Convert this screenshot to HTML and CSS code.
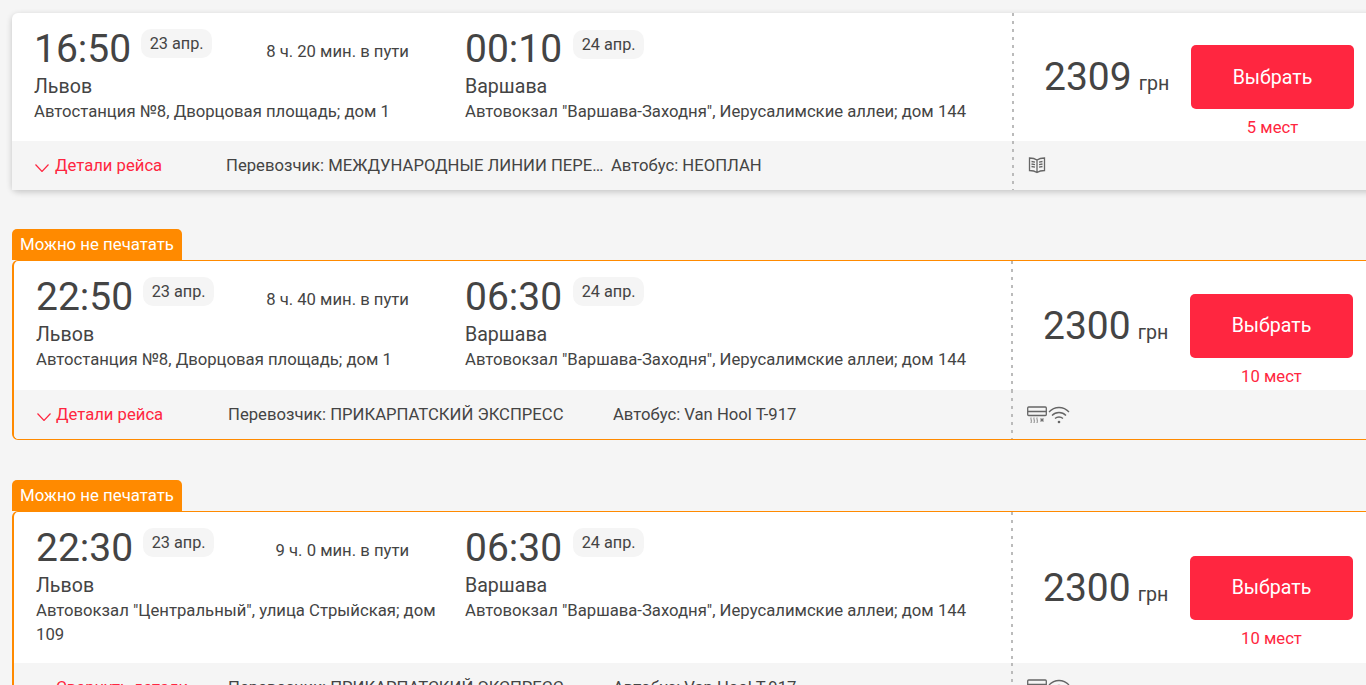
FILE: index.html
```html
<!DOCTYPE html>
<html lang="ru">

<head>
    <meta charset="UTF-8">
    <meta name="viewport" content="width=device-width, initial-scale=1.0">
    <title>Рейсы Львов - Варшава</title>
    <link rel="stylesheet" href="styles.css">
</head>

<body>
    <div class="list">
        <div class="trip trip-first">
            <div class="trip-top">
                <div class="route">
                    <div class="point">
                        <div class="time-row">
                            <span class="time">16:50</span>
                            <span class="date">23 апр.</span>
                            <span class="duration">8 ч. 20 мин. в пути</span>
                        </div>
                        <div class="city">Львов</div>
                        <div class="address">Автостанция №8, Дворцовая площадь; дом 1</div>
                    </div>
                    <div class="point point-end">
                        <div class="time-row">
                            <span class="time">00:10</span>
                            <span class="date">24 апр.</span>
                        </div>
                        <div class="city">Варшава</div>
                        <div class="address">Автовокзал "Варшава-Заходня", Иерусалимские аллеи; дом 144</div>
                    </div>
                </div>
                <div class="buy">
                    <div class="price"><span class="sum">2309</span> <span class="currency">грн</span></div>
                    <button class="select">Выбрать</button>
                    <div class="seats">5 мест</div>
                </div>
            </div>
            <div class="trip-foot">
                <div class="info">
                    <a class="details" href="#">
                        <svg class="chevron" viewBox="0 0 14 8"><path d="M0.5 0.5L7 7.5L13.5 0.5"/></svg>
                        Детали рейса
                    </a>
                    <span class="carrier">Перевозчик: МЕЖДУНАРОДНЫЕ ЛИНИИ ПЕРЕВОЗОК</span>
                    <span class="bus">Автобус: НЕОПЛАН</span>
                </div>
                <div class="extras">
                    <svg class="icon" width="18" height="17" viewBox="0 0 18 17">
                        <path d="M9 3C7 1.600 4 1 1.500 1V13.500C4 13.500 7 14.100 9 15.500C11 14.100 14 13.500 16.500 13.500V1C14 1 11 1.600 9 3ZM9 3V15.500"/>
                        <path d="M3.500 4.500L7 5.200M3.500 7L7 7.700M3.500 9.500L7 10.200M14.500 4.500L11 5.200M14.500 7L11 7.700M14.500 9.500L11 10.200"/>
                    </svg>
                </div>
            </div>
        </div>

        <div class="ticketless">
            <div class="tag">Можно не печатать</div>
            <div class="trip trip-marked">
                <div class="trip-top">
                    <div class="route">
                        <div class="point">
                            <div class="time-row">
                                <span class="time">22:50</span>
                                <span class="date">23 апр.</span>
                                <span class="duration">8 ч. 40 мин. в пути</span>
                            </div>
                            <div class="city">Львов</div>
                            <div class="address">Автостанция №8, Дворцовая площадь; дом 1</div>
                        </div>
                        <div class="point point-end">
                            <div class="time-row">
                                <span class="time">06:30</span>
                                <span class="date">24 апр.</span>
                            </div>
                            <div class="city">Варшава</div>
                            <div class="address">Автовокзал "Варшава-Заходня", Иерусалимские аллеи; дом 144</div>
                        </div>
                    </div>
                    <div class="buy">
                        <div class="price"><span class="sum">2300</span> <span class="currency">грн</span></div>
                        <button class="select">Выбрать</button>
                        <div class="seats">10 мест</div>
                    </div>
                </div>
                <div class="trip-foot">
                    <div class="info">
                        <a class="details" href="#">
                            <svg class="chevron" viewBox="0 0 14 8"><path d="M0.5 0.5L7 7.5L13.5 0.5"/></svg>
                            Детали рейса
                        </a>
                        <span class="carrier">Перевозчик: ПРИКАРПАТСКИЙ ЭКСПРЕСС</span>
                        <span class="bus">Автобус: Van Hool T-917</span>
                    </div>
                    <div class="extras">
                        <svg class="icon" width="20" height="18" viewBox="0 0 20 18">
                            <rect x="0.700" y="1" width="18.600" height="8.500" rx="1"/>
                            <path d="M1 5.500H19"/>
                            <path class="thin" d="M4 11.500C3.500 13 5 14.500 4 17M7 11.500C6.500 13 8 14.500 7 17M10 11.500C9.500 13 11 14.500 10 17"/>
                            <path class="thin" d="M13 14H17M15 12V16M13.500 12.500L16.500 15.500M16.500 12.500L13.500 15.500"/>
                        </svg>
                        <svg class="icon" width="22" height="18" viewBox="0 0 22 18">
                            <path d="M1 6C6.500 0 15.500 0 21 6M4 9.500C7.800 5.500 14.200 5.500 18 9.500M7 12.500C9.200 10.500 12.800 10.500 15 12.500"/>
                            <circle class="dot" cx="11" cy="16" r="1.300"/>
                        </svg>
                    </div>
                </div>
            </div>
        </div>

        <div class="ticketless">
            <div class="tag">Можно не печатать</div>
            <div class="trip trip-marked">
                <div class="trip-top">
                    <div class="route">
                        <div class="point">
                            <div class="time-row">
                                <span class="time">22:30</span>
                                <span class="date">23 апр.</span>
                                <span class="duration">9 ч. 0 мин. в пути</span>
                            </div>
                            <div class="city">Львов</div>
                            <div class="address">Автовокзал "Центральный", улица Стрыйская; дом 109</div>
                        </div>
                        <div class="point point-end">
                            <div class="time-row">
                                <span class="time">06:30</span>
                                <span class="date">24 апр.</span>
                            </div>
                            <div class="city">Варшава</div>
                            <div class="address">Автовокзал "Варшава-Заходня", Иерусалимские аллеи; дом 144</div>
                        </div>
                    </div>
                    <div class="buy">
                        <div class="price"><span class="sum">2300</span> <span class="currency">грн</span></div>
                        <button class="select">Выбрать</button>
                        <div class="seats">10 мест</div>
                    </div>
                </div>
                <div class="trip-foot">
                    <div class="info">
                        <a class="details details-open" href="#">
                            <svg class="chevron" viewBox="0 0 14 8"><path d="M0.5 7.5L7 0.5L13.5 7.5"/></svg>
                            Свернуть детали
                        </a>
                        <span class="carrier">Перевозчик: ПРИКАРПАТСКИЙ ЭКСПРЕСС</span>
                        <span class="bus">Автобус: Van Hool T-917</span>
                    </div>
                    <div class="extras">
                        <svg class="icon" width="20" height="18" viewBox="0 0 20 18">
                            <rect x="0.700" y="1" width="18.600" height="8.500" rx="1"/>
                            <path d="M1 5.500H19"/>
                            <path class="thin" d="M4 11.500C3.500 13 5 14.500 4 17M7 11.500C6.500 13 8 14.500 7 17M10 11.500C9.500 13 11 14.500 10 17"/>
                            <path class="thin" d="M13 14H17M15 12V16M13.500 12.500L16.500 15.500M16.500 12.500L13.500 15.500"/>
                        </svg>
                        <svg class="icon" width="22" height="18" viewBox="0 0 22 18">
                            <path d="M1 6C6.500 0 15.500 0 21 6M4 9.500C7.800 5.500 14.200 5.500 18 9.500M7 12.500C9.200 10.500 12.800 10.500 15 12.500"/>
                            <circle class="dot" cx="11" cy="16" r="1.300"/>
                        </svg>
                    </div>
                </div>
            </div>
        </div>
    </div>
</body>

</html>
```

FILE: styles.css
```css
html,
body {
    height: 100%;
    overflow: hidden;
}

body {
    margin: 0;
    background-color: #f5f5f5;
    font-family: Roboto, "Liberation Sans", sans-serif;
    color: #444;
}

.list {
    width: 1400px;
    padding: 13px 0 0 12px;
}

.trip {
    background-color: #fff;
    border-radius: 6px 0 0 6px;
    overflow: hidden;
}

.trip-first {
    box-shadow: 0 2px 6px rgba(0, 0, 0, 0.2);
    overflow: visible;
}

.trip-marked {
    border: 1px solid #ff8a00;
    border-left-width: 2px;
}

.trip-top,
.trip-foot {
    display: flex;
}

.route {
    display: flex;
    width: 1002px;
    box-sizing: border-box;
    min-height: 128px;
    padding: 14px 0 0 22px;
    background: repeating-linear-gradient(#bbb 0 3px, transparent 3px 8px) right top / 2px 100% no-repeat;
}

.trip-marked .route {
    width: 999px;
    min-height: 129px;
}

.point {
    width: 431px;
    box-sizing: border-box;
    padding-right: 20px;
    padding-bottom: 16px;
    flex-shrink: 0;
}

.trip-marked .point {
    width: 429px;
}

.trip .point-end {
    width: 540px;
    padding-right: 0;
}

.time-row {
    display: flex;
    align-items: flex-start;
    height: 46px;
}

.time {
    font-size: 39px;
    line-height: 45px;
}

.date {
    margin: 2px 0 0 10px;
    padding: 0 8.500px;
    height: 29px;
    line-height: 29px;
    font-size: 16.300px;
    background-color: #f5f5f5;
    border-radius: 10px;
}

.point-end .date {
    margin-left: 11px;
}

.trip-first .point-end .date {
    margin-top: 3px;
}

.duration {
    margin-left: auto;
    margin-right: 36px;
    margin-top: 13px;
    font-size: 16.670px;
    line-height: 24px;
}

.city {
    font-size: 19.600px;
    line-height: 27px;
}

.address {
    font-size: 16.700px;
    line-height: 24px;
}

.buy {
    display: grid;
    grid-template-columns: 147px 163px;
    grid-template-rows: 1fr 64px 1fr;
    padding-left: 30px;
}

.price {
    grid-column: 1;
    grid-row: 2;
    align-self: center;
    white-space: nowrap;
}

.sum {
    font-size: 39px;
}

.currency {
    margin-left: 3px;
    font-size: 19.600px;
}

.select {
    grid-column: 2;
    grid-row: 2;
    border: none;
    border-radius: 5px;
    background-color: #ff2640;
    color: #fff;
    font-family: inherit;
    font-size: 19.600px;
    cursor: pointer;
}

.seats {
    grid-column: 2;
    grid-row: 3;
    margin-top: 8px;
    text-align: center;
    font-size: 16.670px;
    line-height: 22px;
    color: #ff2640;
}

.trip-foot {
    background-color: #f5f5f5;
    height: 49px;
}

.info {
    display: flex;
    align-items: center;
    width: 1002px;
    box-sizing: border-box;
    padding-left: 22px;
    font-size: 16.670px;
    background: repeating-linear-gradient(#bbb 0 3px, transparent 3px 8px) right top / 2px 100% no-repeat;
}

.trip-marked .info {
    width: 999px;
}

.details {
    display: flex;
    align-items: center;
    width: 192px;
    flex-shrink: 0;
    color: #ff2640;
    text-decoration: none;
}

.chevron {
    width: 14px;
    height: 8px;
    margin: 5px 6px 0 1px;
    fill: none;
    stroke: #ff2640;
    stroke-width: 1.2;
}

.trip-marked .chevron {
    margin-right: 5px;
}

.details-open .chevron {
    margin-top: 6px;
}

.carrier {
    width: 385px;
    flex-shrink: 0;
    white-space: nowrap;
    overflow: hidden;
    text-overflow: ellipsis;
    padding-right: 6px;
    box-sizing: border-box;
}

.extras {
    display: flex;
    align-items: center;
    gap: 1px;
    padding-left: 14px;
}

.icon {
    fill: none;
    stroke: #666;
    stroke-width: 1.300;
}

.icon .thin {
    stroke-width: 0.800;
}

.icon .dot {
    fill: #666;
    stroke: none;
}

.ticketless {
    margin-top: 39px;
}

.ticketless + .ticketless {
    margin-top: 40px;
}

.tag {
    width: 170px;
    height: 31px;
    box-sizing: border-box;
    padding-left: 8px;
    background-color: #ff8a00;
    border-radius: 5px 5px 0 0;
    color: #fff;
    font-size: 16.800px;
    line-height: 31px;
}
```
